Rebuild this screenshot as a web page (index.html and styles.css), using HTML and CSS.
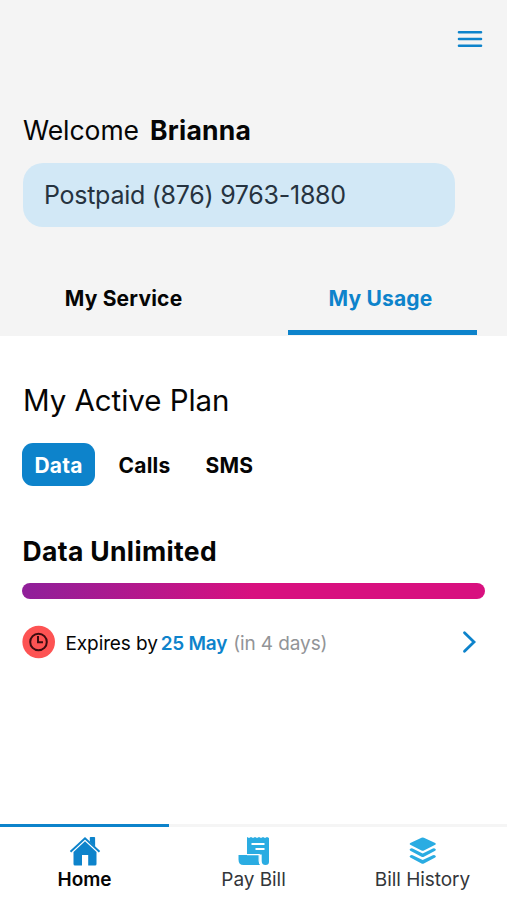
FILE: index.html
```html
<!DOCTYPE html>
<html lang="en">
<head>
<meta charset="utf-8">
<title>My Usage</title>
<link rel="stylesheet" href="styles.css">
</head>
<body>
<header class="header">
  <div class="topbar">
    <svg class="menu" width="26" height="20" viewBox="0 0 26 20"><path d="M2 3.300h22M2 10h22M2 16.700h22" stroke="#0d83cb" stroke-width="2.600" stroke-linecap="round"/></svg>
  </div>
  <h1 class="welcome"><span class="hello">Welcome</span><b class="name">Brianna</b></h1>
  <div class="account"><span class="number">Postpaid (876) 9763-1880</span></div>
  <nav class="tabs">
    <a class="tab"><span>My Service</span></a>
    <a class="tab selected"><span>My Usage</span></a>
  </nav>
</header>
<main class="main">
  <h2 class="title"><span>My Active Plan</span></h2>
  <div class="chips">
    <span class="chip on">Data</span>
    <span class="chip calls">Calls</span>
    <span class="chip sms">SMS</span>
  </div>
  <h3 class="plan"><span>Data Unlimited</span></h3>
  <div class="bar"></div>
  <div class="expiry">
    <svg class="clock" width="34" height="34" viewBox="0 0 34 34"><circle cx="16.700" cy="17" r="16.300" fill="#fd5353"/><g fill="none" stroke="#3b0c10" stroke-width="2"><circle cx="16.500" cy="17" r="8.300"/><path d="M16 11v6.300h5"/></g></svg>
    <span class="by">Expires by</span>
    <span class="date">25 May</span>
    <span class="left">(in 4 days)</span>
    <svg class="chevron" width="16" height="24" viewBox="0 0 16 24"><path d="M3.500 2.800 13 12 3.500 21.200" fill="none" stroke="#0d83cb" stroke-width="2.800" stroke-linecap="round"/></svg>
  </div>
</main>
<nav class="bottom">
  <a class="item current">
    <svg width="32" height="30" viewBox="0 0 32 30"><path d="M1.500 15.800 16 2.300l14.500 13.500" fill="none" stroke="#0d83cb" stroke-width="2"/><path d="M20.800 1.800q0-.8.800-.8h3.700q.8 0 .8.800v9l-5.300-5z" fill="#0d83cb"/><path d="M16 5.200 27.500 16V28q0 1.500-1.500 1.500h-6.800V19h-6.200v10.500H6q-1.500 0-1.500-1.500V16z" fill="#0d83cb"/></svg>
    <span>Home</span>
  </a>
  <a class="item">
    <svg width="32" height="30" viewBox="0 0 32 30"><path d="M9 1l2 1 2-1 2 1 2-1 2 1 2-1 2 1 2-1 2 1 2-1 2 1V26q0 3-3.500 3-3.800 0-3.800-4v-6.500H9z" fill="#2aace2"/><path d="M.5 19h21v6q0 2 1.300 4H5.500Q.5 29 .5 23.500z" fill="#2aace2"/><path d="M13.500 8h13M17.500 13h9" stroke="#fff" stroke-width="2"/><path d="M9 18.600h12.200V25q0 3 2 4.200" fill="none" stroke="#fff" stroke-width="1.200"/></svg>
    <span class="pay">Pay Bill</span>
  </a>
  <a class="item">
    <svg width="32" height="30" viewBox="0 0 32 30"><g fill="#2aace2"><path d="M14.500 1.800q1.200-.6 2.400 0l11.300 5.100q1.500.9 0 1.800L16.900 14.400q-1.200.6-2.400 0L3.300 8.700q-1.500-.9 0-1.800z"/><path d="M3.300 12.700q1-.6 2.300-.1l10.100 5 10.200-5q1.300-.5 2.300.1 1.500 1.100 0 2.100l-11.300 6q-1.200.6-2.400 0l-11.200-6q-1.500-1 0-2.100z"/><path d="M3.300 19.400q1-.6 2.300-.1l10.100 4.700 10.200-4.700q1.300-.5 2.300.1 1.500 1.100 0 2.100l-11.300 6q-1.200.6-2.400 0l-11.200-6q-1.500-1 0-2.100z"/></g></svg>
    <span class="hist">Bill History</span>
  </a>
</nav>
</body>
</html>
```
FILE: styles.css
```css
* { box-sizing: border-box; }
body {
  margin: 0;
  height: 900px;
  display: flex;
  flex-direction: column;
  background: #fff;
  color: #050505;
  font-family: Inter, "Liberation Sans", sans-serif;
  white-space: nowrap;
}
h1, h2, h3 { margin: 0; font-weight: 400; }
svg { display: block; flex: none; }
.header { height: 336px; background: #f4f4f4; }
.topbar { height: 114px; padding: 29px 24px 0 0; display: flex; justify-content: flex-end; }
.welcome { padding-left: 23px; height: 49px; line-height: 33px; font-size: 26.5px; display: flex; gap: 11px; }
.hello { letter-spacing: -0.05px; }
.name { font-weight: 700; letter-spacing: 0.25px; }
.account {
  margin-left: 22.5px;
  width: 432px;
  height: 64px;
  padding-left: 21.5px;
  border-radius: 20px;
  background: #d2e8f6;
  color: #263340;
  font-size: 25px;
  letter-spacing: -0.27px;
  line-height: 65px;
}
.tabs { height: 109px; padding: 0 30px 0 29.5px; display: flex; justify-content: space-between; align-items: flex-end; }
.tab { width: 188px; height: 60px; line-height: 46px; text-align: center; font-size: 21px; font-weight: 700; letter-spacing: 0.2px; }
.tab.selected { width: 189px; color: #0d83cb; border-bottom: 5px solid #0d83cb; margin-bottom: 1px; height: 59px; line-height: 44px; padding: 1px 4px 0 0; }
.main { flex: 1; padding: 45px 22px 0; }
.title { height: 62px; line-height: 38px; padding-left: 1px; font-size: 29.5px; letter-spacing: -0.05px; }
.chips { display: flex; height: 43px; line-height: 45px; font-size: 21px; font-weight: 700; letter-spacing: 0.2px; }
.on { width: 73px; text-align: center; background: #0d83cb; color: #fff; border-radius: 11px; }
.calls { margin-left: 23.5px; width: 87px; }
.plan { margin-top: 48px; height: 49px; padding-left: 0.5px; line-height: 35px; font-size: 26.5px; font-weight: 700; letter-spacing: 0.35px; }
.bar { height: 16px; width: 463px; border-radius: 8px; background: linear-gradient(100deg, #911f99 2%, #d8107f 50%); }
.expiry { margin-top: 26px; height: 34px; display: flex; align-items: center; font-size: 19px; letter-spacing: -0.1px; }
.expiry span { padding-top: 2px; }
.by { margin-left: 9.5px; }
.date { margin-left: 3px; color: #0d83cb; font-weight: 600; letter-spacing: -0.25px; }
.left { margin-left: 6px; color: #929497; }
.chevron { margin-left: auto; margin-right: 8px; }
.bottom { height: 76px; border-top: 3px solid #f5f5f5; display: flex; color: #33363a; font-size: 19px; letter-spacing: -0.05px; }
.item { flex: 1; display: flex; flex-direction: column; align-items: center; padding-top: 9px; line-height: 27px; }
.current { margin-top: -3px; padding-top: 9px; border-top: 3px solid #0d83cb; color: #050505; font-weight: 600; }
```
